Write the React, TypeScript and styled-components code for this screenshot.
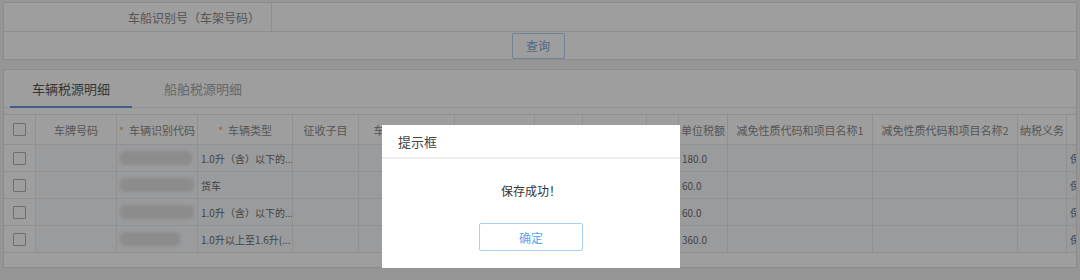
import styled, { createGlobalStyle } from 'styled-components'

const GlobalStyle = createGlobalStyle`
  html, body {
    margin: 0;
    padding: 0;
    background: #f3f3f3;
    font-family: "Noto Sans CJK SC", "Liberation Sans", sans-serif;
    color: #555;
    overflow: hidden;
  }
`

const COLS = '32px 81px 81px 95px 66px 96px 80px 48px 64px 32px 49px 145px 145px 49px 80px'

type Header = { label: string, required?: boolean }

const headers: Header[] = [
  { label: '' },
  { label: '车牌号码' },
  { label: '车辆识别代码', required: true },
  { label: '车辆类型', required: true },
  { label: '征收子目' },
  { label: '车辆发动机号' },
  { label: '车辆品牌型号', required: true },
  { label: '排量', required: true },
  { label: '整备质量', required: true },
  { label: '数量' },
  { label: '单位税额' },
  { label: '减免性质代码和项目名称1' },
  { label: '减免性质代码和项目名称2' },
  { label: '纳税义务' },
  { label: '车辆状态', required: true },
]

const rows = [
  { type: '1.0升（含）以下的...', tax: '180.0', blob: 72 },
  { type: '货车', tax: '60.0', blob: 74 },
  { type: '1.0升（含）以下的...', tax: '60.0', blob: 74 },
  { type: '1.0升以上至1.6升(...', tax: '360.0', blob: 60 },
]

const Page = styled.div`
  padding: 2px 3px 0;
  height: 280px;
  box-sizing: border-box;
`

const FormBox = styled.div`
  border: 1px solid #e2e2e2;
  background: #fff;
`

const FormRow = styled.div<{ $height: number }>`
  display: flex;
  align-items: center;
  height: ${p => p.$height}px;
  & + & {
    border-top: 1px solid #e6e6e6;
  }
`

const LabelCell = styled.div`
  width: 268px;
  height: 100%;
  box-sizing: border-box;
  padding-right: 11px;
  border-right: 1px solid #e6e6e6;
  display: flex;
  align-items: center;
  justify-content: flex-end;
  font-size: 12px;
  color: #8a8a8a;
`

const ButtonRow = styled.div`
  flex: 1;
  display: flex;
  justify-content: center;
  padding-right: 4px;
`

const QueryButton = styled.button`
  width: 53px;
  height: 26px;
  border: 1px solid #b4d3ef;
  border-radius: 2px;
  background: #fff;
  color: #7fa9d6;
  font-family: inherit;
  font-size: 12px;
  padding: 0;
`

const Panel = styled.div`
  margin-top: 9px;
  height: 199px;
  box-sizing: border-box;
  border: 1px solid #e2e2e2;
  background: #fff;
  overflow: hidden;
`

const TabBar = styled.div`
  display: flex;
  gap: 10px;
  height: 37px;
  padding-left: 6px;
  border-bottom: 1px solid #ececec;
`

const Tab = styled.div<{ $active?: boolean }>`
  width: 122px;
  display: flex;
  align-items: center;
  justify-content: center;
  font-size: 13px;
  color: ${p => (p.$active ? '#5a5a5a' : '#a8a8a8')};
  border-bottom: 2px solid ${p => (p.$active ? '#6b9ad6' : 'transparent')};
  margin-bottom: -1px;
`

const TableWrap = styled.div`
  margin-top: 6px;
  overflow: hidden;
`

const Row = styled.div<{ $head?: boolean }>`
  display: grid;
  grid-template-columns: ${COLS};
  width: max-content;
  height: ${p => (p.$head ? 29 : 26)}px;
  border-bottom: 1px solid #ebebeb;
  background: ${p => (p.$head ? '#fff' : '#f8fafd')};
  border-top: ${p => (p.$head ? '1px solid #ebebeb' : 'none')};
`

const Cell = styled.div<{ $head?: boolean }>`
  display: flex;
  align-items: center;
  justify-content: ${p => (p.$head ? 'center' : 'flex-start')};
  padding: 0 3px;
  border-right: 1px solid #ebebeb;
  white-space: nowrap;
  overflow: hidden;
  font-size: ${p => (p.$head ? '11px' : '10px')};
  color: ${p => (p.$head ? '#8c8c8c' : '#6e6e6e')};
  &:first-child {
    justify-content: center;
    background: #fff;
  }
`

const Star = styled.span`
  color: #f3a060;
  margin-right: 5px;
  font-size: 11px;
`

const Check = styled.span`
  width: 11px;
  height: 11px;
  border: 1px solid #b2b2b2;
  border-radius: 1px;
  background: #fff;
`

const Blob = styled.span<{ $w: number }>`
  width: ${p => p.$w}px;
  height: 14px;
  border-radius: 5px;
  background: #e2e2e2;
  filter: blur(1.5px);
`

const Mask = styled.div`
  position: fixed;
  inset: 0;
  background: rgba(0, 0, 0, 0.38);
  z-index: 10;
`

const Dialog = styled.div`
  position: fixed;
  left: 382px;
  top: 125px;
  width: 298px;
  height: 143px;
  background: #fff;
  z-index: 11;
  display: flex;
  flex-direction: column;
`

const DialogHead = styled.div`
  height: 32px;
  display: flex;
  align-items: center;
  padding-left: 16px;
  font-size: 13px;
  color: #444;
  border-bottom: 2px solid #eeeeee;
`

const DialogBody = styled.div`
  flex: 1;
  display: flex;
  flex-direction: column;
  align-items: center;
  padding-top: 24px;
`

const Message = styled.div`
  font-size: 12px;
  line-height: 16px;
  color: #333;
`

const OkButton = styled.button`
  margin-top: 24px;
  width: 104px;
  height: 28px;
  border: 1px solid #a6d0f4;
  border-radius: 2px;
  background: #fff;
  color: #5aa7ee;
  font-family: inherit;
  font-size: 12px;
  padding: 0;
`

export default function App() {
  return (
    <>
      <GlobalStyle />
      <Page>
        <FormBox>
          <FormRow $height={28}>
            <LabelCell>车船识别号（车架号码）</LabelCell>
          </FormRow>
          <FormRow $height={27}>
            <ButtonRow>
              <QueryButton>查询</QueryButton>
            </ButtonRow>
          </FormRow>
        </FormBox>
        <Panel>
          <TabBar>
            <Tab $active>车辆税源明细</Tab>
            <Tab>船舶税源明细</Tab>
          </TabBar>
          <TableWrap>
            <Row $head>
              {headers.map((h, i) => (
                <Cell $head key={i}>
                  {i === 0 ? <Check /> : (
                    <>
                      {h.required && <Star>*</Star>}
                      {h.label}
                    </>
                  )}
                </Cell>
              ))}
            </Row>
            {rows.map((r, ri) => (
              <Row key={ri}>
                {headers.map((_, i) => (
                  <Cell key={i}>
                    {i === 0 && <Check />}
                    {i === 2 && <Blob $w={r.blob} />}
                    {i === 3 && r.type}
                    {i === 10 && r.tax}
                    {i === 14 && '保有'}
                  </Cell>
                ))}
              </Row>
            ))}
          </TableWrap>
        </Panel>
      </Page>
      <Mask />
      <Dialog>
        <DialogHead>提示框</DialogHead>
        <DialogBody>
          <Message>保存成功！</Message>
          <OkButton>确定</OkButton>
        </DialogBody>
      </Dialog>
    </>
  )
}
